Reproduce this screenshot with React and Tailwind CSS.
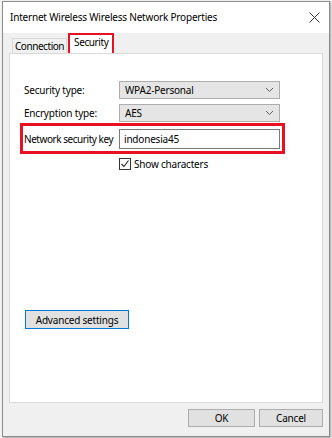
import React from "react";

const Chevron = () => (
  <svg width="9" height="6" viewBox="0 0 9 6" className="shrink-0">
    <path d="M1 1 L4.5 4.5 L8 1" fill="none" stroke="#606060" strokeWidth="1" />
  </svg>
);

const Select = ({ value }) => (
  <div className="flex items-center justify-between w-[161px] h-[18px] bg-[#e5e5e5] border border-[#adadad] pl-[5px] pr-[5px] text-[10px] leading-none text-black">
    <span>{value}</span>
    <Chevron />
  </div>
);

export default function App() {
  return (
    <div
      className="w-[332px] h-[438px] bg-[#f4f4f4] pl-[2px] pr-[2px] pt-[1px] pb-[1px] tracking-[-0.2px]"
      style={{ fontFamily: '"Noto Sans", "Open Sans", sans-serif' }}
    >
      <div className="h-full flex flex-col border border-[#8c8c8c] shadow-[1px_1px_2px_rgba(0,0,0,0.35)]">
        <div className="h-[31px] bg-white flex items-center justify-between pl-[7px] pr-[9px] shrink-0">
          <span className="text-[10px] text-black whitespace-nowrap">Internet Wireless Wireless Network Properties</span>
          <svg width="11" height="11" viewBox="0 0 11 11">
            <path d="M0.5 0.5 L10.5 10.5 M10.5 0.5 L0.5 10.5" stroke="#333" strokeWidth="1" />
          </svg>
        </div>
        <div className="flex-1 bg-[#f0f0f0] flex flex-col px-[6px]">
          <div className="flex items-end h-[20px] pl-[3px]">
            <div className="h-[15px] px-[2px] border border-b-0 border-[#d9d9d9] bg-[#f0f0f0] text-[10px] leading-[14px] text-black tracking-[-0.45px]">
              Connection
            </div>
            <div className="h-[20px] border-[2px] border-[#e81123] border-b-0 bg-white ml-[1px] px-[4px] flex items-start">
              <span className="text-[10px] leading-[14px] text-black tracking-[-0.4px]">Security</span>
            </div>
          </div>
          <div className="h-[350px] bg-white border border-[#d9d9d9] pt-[27px] pl-[10px] text-[10px] leading-[14px] text-black whitespace-nowrap">
            <div className="flex items-center h-[18px] pl-[4px] mb-[5px]">
              <span className="w-[95px]">Security type:</span>
              <Select value="WPA2-Personal" />
            </div>
            <div className="flex items-center h-[18px] pl-[4px] mb-[1px]">
              <span className="w-[95px]">Encryption type:</span>
              <Select value="AES" />
            </div>
            <div className="flex items-center w-[265px] h-[31px] border-[3px] border-[#e81123] pl-[1px]">
              <span className="w-[95px] tracking-[-0.45px]">Network security key</span>
              <div className="w-[161px] h-[20px] border border-[#7a7a7a] bg-white flex items-center pl-[4px]">
                indonesia45
              </div>
            </div>
            <div className="flex items-center h-[12px] mt-[4px] ml-[99px]">
              <div className="w-[12px] h-[12px] border border-[#333] bg-white flex items-center justify-center">
                <svg width="10" height="10" viewBox="0 0 10 10">
                  <path d="M1.5 5 L4 7.5 L8.5 1.5" fill="none" stroke="#222" strokeWidth="1.1" />
                </svg>
              </div>
              <span className="ml-[3px]">Show characters</span>
            </div>
            <div className="mt-[140px] ml-[5px] w-[104px] h-[19px] border border-[#0078d7] bg-[#e1e1e1] flex items-center justify-center">
              Advanced settings
            </div>
          </div>
          <div className="flex justify-end gap-[4px] mt-[6px]">
            <div className="w-[67px] h-[18px] border border-[#adadad] bg-[#e1e1e1] flex items-center justify-center text-[10px] text-black">
              OK
            </div>
            <div className="w-[64px] h-[18px] border border-[#adadad] bg-[#e1e1e1] flex items-center justify-center text-[10px] text-black">
              Cancel
            </div>
          </div>
        </div>
      </div>
    </div>
  );
}
